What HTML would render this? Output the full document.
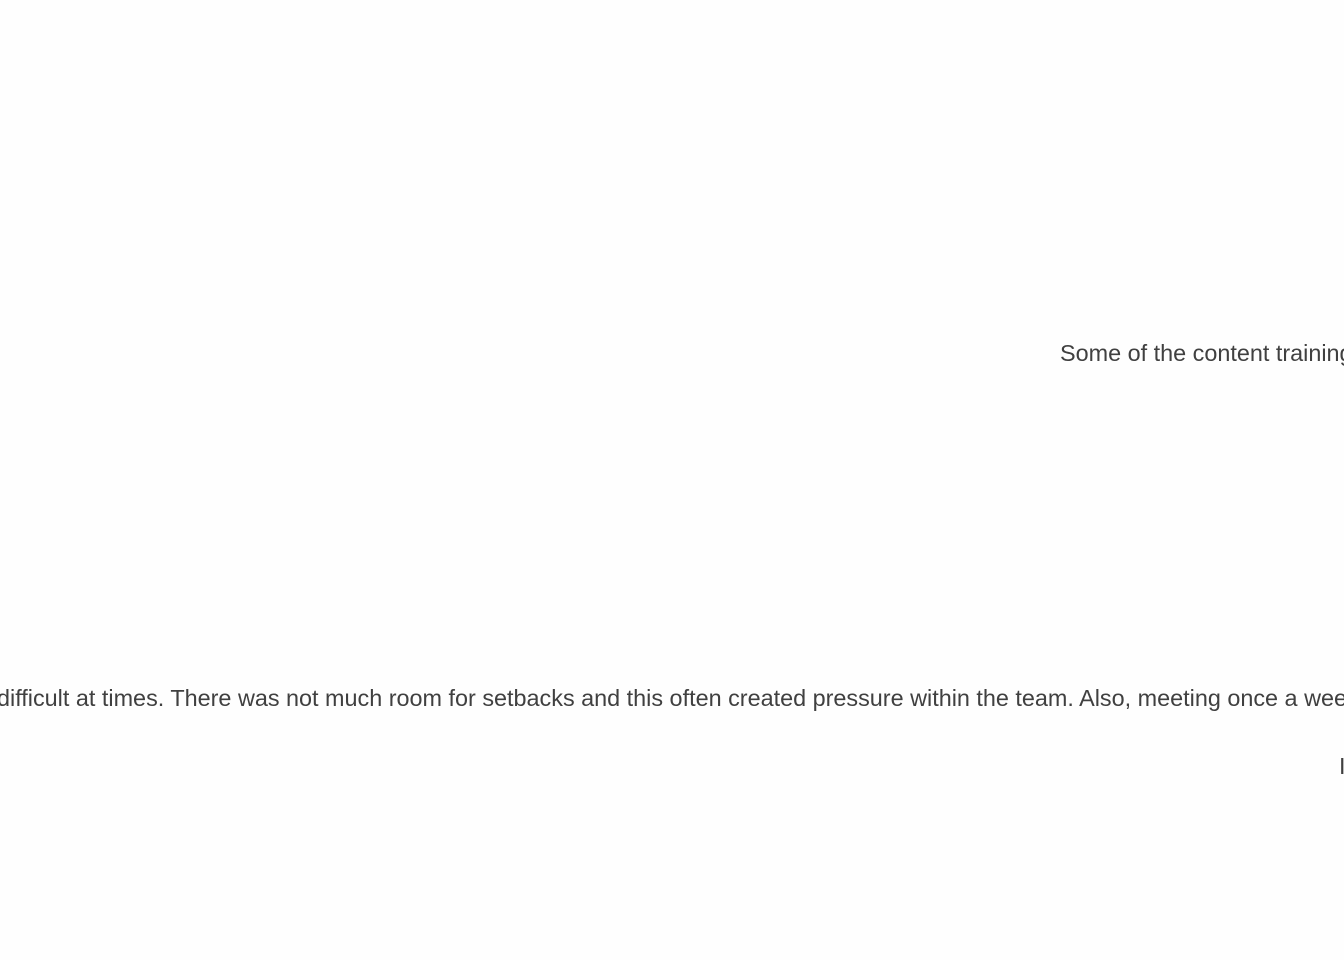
<!DOCTYPE html>
<html><head><meta charset="utf-8"><style>
html,body{margin:0;padding:0;width:1344px;height:960px;overflow:hidden;background:#fefefe;}
.t{position:absolute;white-space:nowrap;font-family:"Liberation Sans",Arial,sans-serif;font-size:23.4px;line-height:26px;color:#404040;}
</style></head><body>
<div class="t" style="left:1060px;top:340px;">Some of the content training</div>
<div class="t" style="left:-3px;top:685px;">difficult at times. There was not much room for setbacks and this often created pressure within the team. Also, meeting once a week</div>
<div class="t" style="left:1339px;top:753px;">I</div>
</body></html>
